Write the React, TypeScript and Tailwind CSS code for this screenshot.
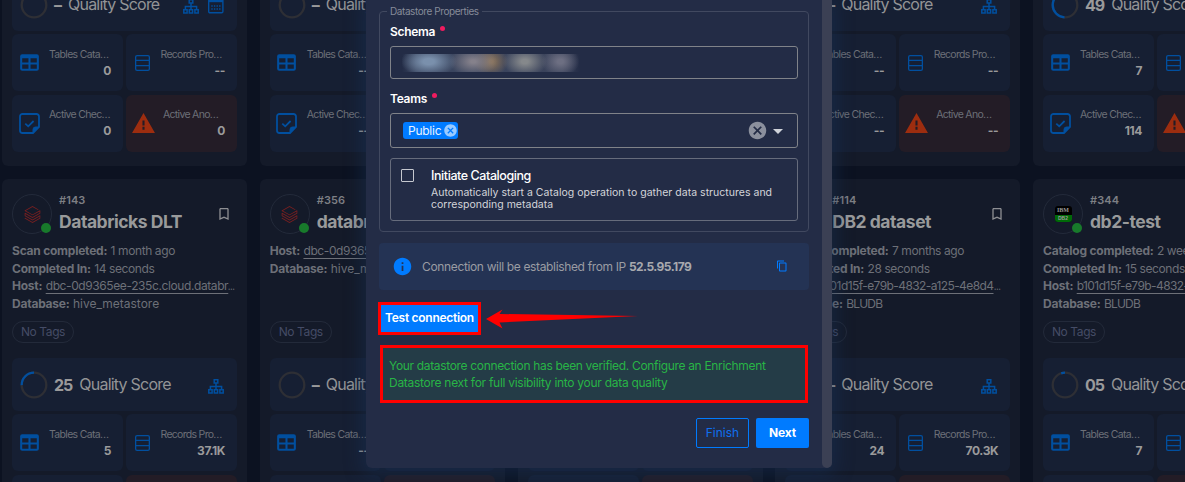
import React from "react";
import { MdArrowDropDown, MdBookmarkBorder, MdCancel, MdContentCopy, MdInfo } from "react-icons/md";
import { SiDatabricks } from "react-icons/si";

type Stats = { tables: string; records: string; checks: string; anomalies: string };
type Info = { label: string; value: string; link?: boolean; valueCls?: string };
type Store = {
  id: string;
  name: string;
  kind: "databricks" | "db2";
  info: Info[];
};
type Quality = { score: string; percent: number; calendar?: boolean };

const TableIcon = () => (
  <svg viewBox="0 0 24 24" className="-ml-0.5 size-[25px] fill-[#014f9f]">
    <path d="M5,4H19A2,2 0 0,1 21,6V18A2,2 0 0,1 19,20H5A2,2 0 0,1 3,18V6A2,2 0 0,1 5,4M5,8V12H11V8H5M13,8V12H19V8H13M5,14V18H11V14H5M13,14V18H19V14H13Z" />
  </svg>
);

const RowsIcon = () => (
  <svg viewBox="0 0 15 16" className="-ml-[3px] h-4 w-[15px] fill-none stroke-[#014f9f]" strokeWidth="1.3">
    <rect x="0.65" y="0.65" width="13.7" height="14.7" rx="1.4" />
    <path d="M0.6 5.4H14.4M0.6 10.7H14.4" />
  </svg>
);

const CheckNoteIcon = () => (
  <svg viewBox="0 0 21 21" className="-ml-0.5 size-[21px] fill-none stroke-[#014f9f]" strokeWidth="1.8">
    <path d="M14 20H3.5A2.5 2.5 0 0 1 1 17.500V3.500A2.500 2.500 0 0 1 3.500 1H17.500A2.500 2.500 0 0 1 20 3.500V14Z" />
    <path d="M6.300 10.600L9.200 13.300L14.600 8" />
    <path d="M14 20V16.500A2.500 2.500 0 0 1 16.500 14H20Z" className="fill-[#014f9f]" strokeWidth="1" />
  </svg>
);

const AlertIcon = () => (
  <svg viewBox="0 0 24 24" className="-ml-px size-[25px] fill-[#9d2d0f]">
    <path d="M13 14H11V9H13M13 18H11V15H13M1 21H23L12 2L1 21Z" />
  </svg>
);

const SitemapIcon = () => (
  <svg viewBox="0 0 16 15" className="h-[15px] w-4 fill-none stroke-[#014f9f]" strokeWidth="1.5">
    <rect x="6.200" y="0.700" width="3.600" height="3.300" />
    <rect x="0.800" y="10.700" width="3.300" height="3.300" />
    <rect x="6.300" y="10.700" width="3.300" height="3.300" />
    <rect x="11.900" y="10.700" width="3.300" height="3.300" />
    <path d="M8 4V10.700M2.400 10.700V7.500H13.600V10.700" />
  </svg>
);

const CalendarIcon = () => (
  <svg viewBox="0 0 16 16" className="-mt-px size-4 fill-none stroke-[#014f9f]" strokeWidth="1.400">
    <rect x="0.700" y="1.200" width="14.200" height="13.600" rx="1.200" />
    <path d="M0.700 3H15" strokeWidth="2.400" />
    <path d="M3.300 8H4.700M5.900 8H7.300M8.500 8H9.900M11.100 8H12.500M3.300 11H4.700M5.900 11H7.300M8.500 11H9.900M11.100 11H12.500" />
  </svg>
);

function Ring({ percent }: { percent: number }) {
  const len = 2 * Math.PI * 12.3;
  return (
    <svg viewBox="0 0 28 28" className="size-7 fill-none">
      <circle cx="14" cy="14" r="12.3" strokeWidth="2.300" className="stroke-[#2e2f35]" />
      {percent > 0 && (
        <circle
          cx="14"
          cy="14"
          r="12.300"
          strokeWidth="2.300"
          className="stroke-[#014f9f]"
          strokeDasharray={`${(len * percent) / 100} ${len}`}
          transform="rotate(-90 14 14) scale(1 -1) translate(0 -28)"
        />
      )}
    </svg>
  );
}

function QualityBox({ score, percent, calendar }: Quality) {
  return (
    <div className="flex h-[53px] items-center rounded-md bg-[#161f33] pr-[13.500px] pl-2">
      <Ring percent={percent} />
      <span className="ml-1.5 shrink-0 text-[16px] font-bold tracking-[-1px] text-[#9a9a9b]">{score}</span>
      <span className="-mt-px ml-[7px] shrink-0 text-[16px] tracking-[-0.78px] text-[#939496]">Quality Score</span>
      <div className="mt-[3px] ml-auto flex gap-[9px]">
        <SitemapIcon />
        {calendar && <CalendarIcon />}
      </div>
    </div>
  );
}

type TileProps = { icon: React.ReactNode; label: string; value: string; labelCls: string; danger?: boolean; raised?: boolean };

function Tile({ icon, label, value, labelCls, danger, raised }: TileProps) {
  return (
    <div className={`flex h-[57px] items-center rounded-md pr-3 ${danger ? "bg-[#231c26]" : "bg-[#161f33]"}`}>
      <div className="flex w-9 shrink-0 items-center justify-center">{icon}</div>
      <div className={`flex min-w-0 flex-1 flex-col ${raised ? "-mt-0.5" : ""}`}>
        <span className={`text-[10.5px] leading-4 text-[#6d7078] ${labelCls}`}>{label}</span>
        <span className="self-end text-[12px] leading-[15px] font-bold tracking-[-0.4px] text-[#9a9a9b]">{value}</span>
      </div>
    </div>
  );
}

function StatGrid({ tables, records, checks, anomalies }: Stats) {
  return (
    <div className="mt-[3px] grid grid-cols-[111px_111px] gap-x-[3px] gap-y-1">
      <Tile icon={<TableIcon />} label="Tables Cata…" value={tables} labelCls="pl-px tracking-[-0.68px]" />
      <Tile icon={<RowsIcon />} label="Records Pro…" value={records} labelCls="-ml-[1.5px] tracking-[-0.7px]" />
      <Tile icon={<CheckNoteIcon />} label="Active Chec…" value={checks} labelCls="pl-px tracking-[-0.68px]" raised />
      <Tile icon={<AlertIcon />} label="Active Ano…" value={anomalies} labelCls="pl-px tracking-[-0.7px]" danger raised />
    </div>
  );
}

function Avatar({ kind }: { kind: Store["kind"] }) {
  return (
    <div className="relative flex size-10 shrink-0 items-center justify-center rounded-full border border-[#232a3a]">
      {kind === "databricks" ? (
        <SiDatabricks className="size-[17px] text-[#7a1f20]" />
      ) : (
        <div className="flex h-4 w-[17px] flex-col overflow-hidden rounded-[3px] bg-black text-center font-['Liberation_Serif',serif] text-[6px] leading-[9px] font-bold text-[#999]">
          <span>IBM</span>
          <span className="bg-[#006a08] font-['Liberation_Sans',sans-serif] text-[5px] leading-[7px]">DB2</span>
        </div>
      )}
      <span className="absolute right-0 bottom-0 size-2.5 rounded-full bg-[#187a2b]" />
    </div>
  );
}

function StoreCard({ store, quality, stats }: { store: Store; quality: Quality; stats: Stats }) {
  return (
    <article className="h-[367px] w-[245px] overflow-hidden rounded-md bg-[#141a29] px-2.5 pt-[15px] whitespace-nowrap">
      <div className="flex">
        <Avatar kind={store.kind} />
        <div className="ml-[7px] flex flex-1 flex-col">
          <span className="-mt-px text-[11px] leading-[14px] font-semibold tracking-[0.1px] text-[#7d7f84]">{store.id}</span>
          <span className="mt-[3px] text-[17.5px] leading-6 font-bold tracking-[-0.46px] text-[#999a9b]">{store.name}</span>
        </div>
        <MdBookmarkBorder className="mt-3 mr-[5px] size-4 text-[#8d8e92]" />
      </div>
      <div className="mt-2 h-[79px] text-[12px] leading-[17.7px] text-[#6d7078]">
        {store.info.map((row) => (
          <div key={row.label}>
            <b className="tracking-[-0.23px]">{row.label}</b>{" "}
            <span className={`${row.link ? "underline underline-offset-[3px]" : ""} ${row.valueCls ?? "tracking-[-0.4px]"}`}>{row.value}</span>
            {row.link && <span className="inline-block w-2 origin-left scale-x-65">…</span>}
          </div>
        ))}
      </div>
      <span className="flex h-[22px] w-[62px] items-center justify-center rounded-full border border-[#232a3a] text-[12px] tracking-[-0.4px] text-[#454c66]">
        No Tags
      </span>
      <div className="mt-[15px]">
        <QualityBox {...quality} />
        <StatGrid {...stats} />
      </div>
    </article>
  );
}

function StoreCardTail({ quality, stats }: { quality: Quality; stats: Stats }) {
  return (
    <article className="h-[188px] w-[245px] overflow-hidden rounded-b-md bg-[#141a29] px-2.5 whitespace-nowrap">
      <QualityBox {...quality} />
      <StatGrid {...stats} />
    </article>
  );
}

const none: Stats = { tables: "--", records: "--", checks: "--", anomalies: "--" };

const topRow: { quality: Quality; stats: Stats }[] = [
  { quality: { score: "–", percent: 0, calendar: true }, stats: { tables: "0", records: "--", checks: "0", anomalies: "0" } },
  { quality: { score: "–", percent: 0 }, stats: none },
  { quality: { score: "–", percent: 0 }, stats: none },
  { quality: { score: "–", percent: 0 }, stats: none },
  { quality: { score: "49", percent: 49 }, stats: { tables: "7", records: "--", checks: "114", anomalies: "--" } },
];

const bottomRow: { store: Store; quality: Quality; stats: Stats }[] = [
  {
    store: {
      id: "#143",
      name: "Databricks DLT",
      kind: "databricks",
      info: [
        { label: "Scan completed:", value: "1 month ago" },
        { label: "Completed In:", value: "14 seconds" },
        { label: "Host:", value: "dbc-0d9365ee-235c.cloud.databr", link: true },
        { label: "Database:", value: "hive_metastore", valueCls: "tracking-[0px]" },
      ],
    },
    quality: { score: "25", percent: 25 },
    stats: { tables: "5", records: "37.1K", checks: "--", anomalies: "--" },
  },
  {
    store: {
      id: "#356",
      name: "databricks",
      kind: "databricks",
      info: [
        { label: "Host:", value: "dbc-0d9365ee-235c.cloud.databr", link: true },
        { label: "Database:", value: "hive_metastore", valueCls: "tracking-[0px]" },
      ],
    },
    quality: { score: "–", percent: 0 },
    stats: none,
  },
  {
    store: { id: "", name: "", kind: "databricks", info: [] },
    quality: { score: "–", percent: 0 },
    stats: none,
  },
  {
    store: {
      id: "#114",
      name: "DB2 dataset",
      kind: "db2",
      info: [
        { label: "Profile completed:", value: "7 months ago" },
        { label: "Completed In:", value: "28 seconds" },
        { label: "Host:", value: "b101d15f-e79b-4832-a125-4e8d4", link: true, valueCls: "tracking-[-0.58px]" },
        { label: "Database:", value: "BLUDB", valueCls: "tracking-[-0.8px]" },
      ],
    },
    quality: { score: "–", percent: 0 },
    stats: { tables: "24", records: "70.3K", checks: "--", anomalies: "--" },
  },
  {
    store: {
      id: "#344",
      name: "db2-test",
      kind: "db2",
      info: [
        { label: "Catalog completed:", value: "2 weeks ago" },
        { label: "Completed In:", value: "15 seconds" },
        { label: "Host:", value: "b101d15f-e79b-4832-a125-4e8d4", link: true, valueCls: "tracking-[-0.58px]" },
        { label: "Database:", value: "BLUDB", valueCls: "tracking-[-0.8px]" },
      ],
    },
    quality: { score: "05", percent: 5 },
    stats: { tables: "7", records: "--", checks: "--", anomalies: "--" },
  },
];

const FieldLabel = ({ children }: { children: React.ReactNode }) => (
  <div className="flex h-4 gap-[5px] text-[12px] leading-4 font-semibold tracking-[-0.3px] text-white">
    {children}
    <span className="mt-0.5 size-[5px] rounded-full bg-[#f01b5f]" />
  </div>
);

function Dialog() {
  return (
    <div className="absolute top-0 left-[366px] flex h-[468px] w-[466px] rounded-b-md bg-[#232c46] shadow-[0_4px_18px_4px_rgba(24,50,90,0.45)]">
      <div className="flex-1 pr-[13px] pl-[13px] whitespace-nowrap">
        <fieldset className="mt-[3px] h-[229px] rounded border border-[#414960] px-2.5">
          <legend className="-ml-[3px] h-4 px-[3px] text-[10px] leading-4 tracking-[-0.42px] text-[#868b99]">Datastore Properties</legend>
          <div className="mt-[5px]">
            <FieldLabel>Schema</FieldLabel>
          </div>
          <div className="mt-[6px] flex h-[33px] items-center rounded-[3px] border border-[#808389] px-[11px]">
            <div className="h-[18px] w-[178px] bg-[radial-gradient(ellipse_28px_15px_at_15%_42%,#7a90ac_20%,transparent_100%),radial-gradient(ellipse_24px_15px_at_40%_42%,#85818b_10%,transparent_100%),radial-gradient(ellipse_17px_15px_at_50%_42%,#8b7358_10%,transparent_100%),radial-gradient(ellipse_22px_15px_at_69%_42%,#85888b_15%,transparent_100%),radial-gradient(ellipse_19px_15px_at_89%_42%,#6d6f82_15%,transparent_100%),linear-gradient(90deg,#232c46_0%,#3a4660_8%,#3a425a_90%,#232c46_100%)]" />
          </div>
          <div className="mt-3">
            <FieldLabel>Teams</FieldLabel>
          </div>
          <div className="mt-[6px] flex h-[35px] items-center rounded-[3px] border border-[#808389] pr-[7px] pl-3">
            <span className="flex h-[17px] w-[55px] items-center justify-between rounded-[3px] bg-[#007bff] pl-[5px] text-[12px] tracking-[-0.25px] text-[#e8f2ff]">
              Public
              <MdCancel className="size-[15px] text-[#99caff]" />
            </span>
            <MdCancel className="ml-auto size-[21px] text-[#8b909d]" />
            <MdArrowDropDown className="-ml-0.5 size-6 text-[#d0d3da]" />
          </div>
          <div className="mt-2.5 flex h-[63px] rounded-[3px] border border-[#666c7c] pt-2.5 pl-2.5">
            <span className="size-[13px] rounded-[1px] border border-[#c5c8cf]" />
            <div className="ml-[17px]">
              <div className="-mt-0.5 h-[17px] text-[12.5px] leading-[17px] font-medium tracking-[-0.42px] text-white">Initiate Cataloging</div>
              <div className="mt-[3px] text-[10.5px] leading-3 tracking-[0.02px] text-[#d3d5da]">
                Automatically start a Catalog operation to gather data structures and
                <br />
                corresponding metadata
              </div>
            </div>
          </div>
        </fieldset>

        <div className="mt-[11px] flex h-[47px] items-center rounded bg-[#243354] pr-[21px] pl-[13px] text-[12px] text-[#9a9ca3]">
          <MdInfo className="size-[21px] text-[#007bff]" />
          <span className="ml-[9px] tracking-[-0.35px]">Connection will be established from IP</span>
          <b className="ml-[3px] tracking-[-0.55px] text-[#a8a9ae]">52.5.95.179</b>
          <MdContentCopy className="-mt-px ml-auto size-3 text-[#007bff]" />
        </div>

        <div className="mt-3 -ml-px flex items-center">
          <button className="h-[33px] w-[103px] border-[3px] border-[#f00] bg-[#007bff] pb-px text-[12px] font-semibold tracking-[-0.28px] text-white">
            Test connection
          </button>
          <svg viewBox="0 0 152 20" className="ml-[5px] h-5 w-[152px] fill-[#f00]">
            <path d="M0 10L16.500 0.500L13.500 5L152 7L13.500 13.500L16.500 19.500Z" />
          </svg>
        </div>

        <div className="mt-2.5 -mr-px ml-px h-[58px] w-[428px] border-[3px] border-[#f00] bg-[#243c47] pt-[9px] pl-1.5 text-[12px] leading-[17px] tracking-[-0.33px] text-[#28b446]">
          Your datastore connection has been verified. Configure an Enrichment
          <br />
          <span className="tracking-[-0.28px]">Datastore next for full visibility into your data quality</span>
        </div>

        <div className="mt-[15px] flex justify-end gap-[7px] text-[12px]">
          <button className="h-[30px] w-[53px] rounded-[2px] border border-[#007bff] text-[#0f70f0]">Finish</button>
          <button className="h-[30px] w-[53px] rounded-[2px] bg-[#007bff] font-bold tracking-[-0.2px] text-white">Next</button>
        </div>
      </div>
      <div className="w-2.5 rounded-b-[5px] bg-[#3b4054]" />
    </div>
  );
}

export default function App() {
  return (
    <div className="relative h-[482px] w-[1185px] overflow-hidden bg-[#0c1221] pl-0.5 font-['Inter',sans-serif]">
      <div className="-mt-[22px] flex gap-[12.75px] [&>*]:shrink-0">
        {topRow.map((card, i) => (
          <StoreCardTail key={i} {...card} />
        ))}
      </div>
      <div className="mt-[13px] flex gap-[12.75px] [&>*]:shrink-0">
        {bottomRow.map((card, i) => (
          <StoreCard key={i} {...card} />
        ))}
      </div>
      <Dialog />
    </div>
  );
}
